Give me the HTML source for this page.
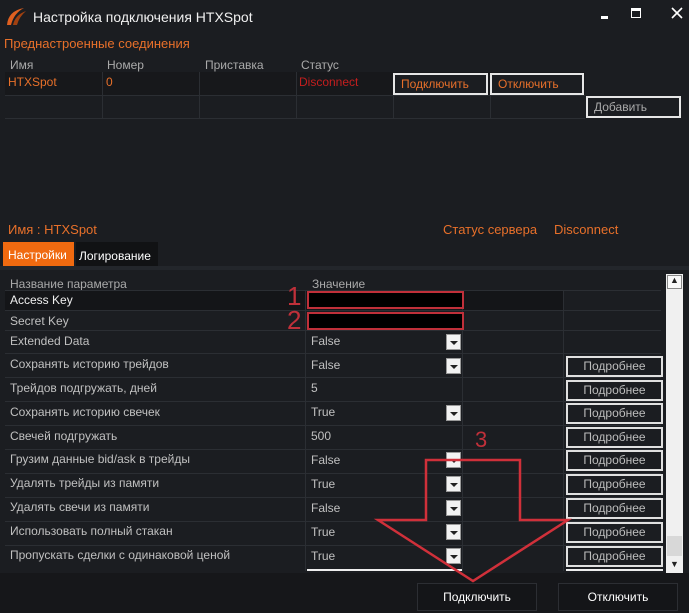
<html><head><style>
body{margin:0;width:689px;height:613px;background:#1b1d21;font-family:"Liberation Sans",sans-serif;font-size:12px;color:#c8c8c8;position:relative;overflow:hidden}
div,span{position:absolute;box-sizing:border-box}
.o{color:#e8702a}
.btnw{border:2px solid #e6e6e6;background:#1b1d21;color:#e8702a;padding:2px 6px;font-size:12px}
.pd{left:566px;width:97px;height:21px;border:2px solid #e0e0e0;background:#1b1d21;color:#bdbdbd;text-align:center;line-height:17px;font-size:12px}
.dd{left:446px;width:15px;height:16px;background:#f2f2f2;border:1px solid #999}
.dd:after{content:"";position:absolute;left:3px;top:6px;border-left:4px solid transparent;border-right:4px solid transparent;border-top:4px solid #222}
.rl{left:5px;width:656px;border-top:1px solid #2b2e33}
.t{left:10px;color:#c0c0c0}
.v{left:311px;color:#c0c0c0}
</style></head><body>
<svg style="position:absolute;left:4px;top:5px" width="24" height="22"><path d="M3 20 Q4 6 20 3 Q10 8 7 20Z" fill="#e06020"/><path d="M9 20 Q11 10 22 6 Q15 12 13 20Z" fill="#a04010"/></svg>
<span style="left:33px;top:9px;font-size:14px;color:#f0f0f0">Настройка подключения HTXSpot</span>
<span style="left:601px;top:16px;width:7px;height:3px;background:#fff"></span>
<span style="left:631px;top:8px;width:10px;height:10px;border:1.5px solid #fff;border-top-width:3px"></span>
<svg style="position:absolute;left:671px;top:7px" width="12" height="12"><path d="M1 1L11 11M11 1L1 11" stroke="#fff" stroke-width="1.6"/></svg>
<span class="o" style="left:4px;top:36px;font-size:13px">Преднастроенные соединения</span>
<span style="left:10px;top:58px;color:#aaa">Имя</span>
<span style="left:107px;top:58px;color:#aaa">Номер</span>
<span style="left:205px;top:58px;color:#aaa">Приставка</span>
<span style="left:301px;top:58px;color:#aaa">Статус</span>
<div style="left:5px;top:72px;width:580px;height:24px;background:#17181b"></div>
<span class="o" style="left:8px;top:75px">HTXSpot</span>
<span class="o" style="left:106px;top:75px">0</span>
<span style="left:299px;top:75px;color:#c41e1e">Disconnect</span>
<div class="btnw" style="left:393px;top:73px;width:95px;height:22px">Подключить</div>
<div class="btnw" style="left:490px;top:73px;width:94px;height:22px">Отключить</div>
<div style="left:5px;top:95px;width:580px;border-top:1px solid #2b2e33"></div>
<div style="left:5px;top:118px;width:580px;border-top:1px solid #2b2e33"></div>
<div style="left:102px;top:72px;height:46px;border-left:1px solid #2b2e33"></div>
<div style="left:199px;top:72px;height:46px;border-left:1px solid #2b2e33"></div>
<div style="left:296px;top:72px;height:46px;border-left:1px solid #2b2e33"></div>
<div style="left:393px;top:95px;height:23px;border-left:1px solid #2b2e33"></div>
<div style="left:490px;top:95px;height:23px;border-left:1px solid #2b2e33"></div>
<div class="btnw" style="left:586px;top:96px;width:95px;height:22px;color:#aaa">Добавить</div>
<span class="o" style="left:8px;top:222px;font-size:13px">Имя : HTXSpot</span>
<span class="o" style="left:443px;top:222px;font-size:13px">Статус сервера</span>
<span class="o" style="left:554px;top:222px;font-size:13px">Disconnect</span>
<div style="left:3px;top:242px;width:71px;height:24px;background:#f06a10;color:#fff;padding:6px 0 0 5px">Настройки</div>
<div style="left:76px;top:242px;width:82px;height:24px;background:#111214;color:#fff;padding:7px 0 0 3px">Логирование</div>
<div style="left:0;top:266px;width:689px;height:4px;background:#23262b"></div>
<span style="left:10px;top:277px;color:#aaa">Название параметра</span>
<span style="left:312px;top:277px;color:#aaa">Значение</span>
<div style="left:5px;top:290px;width:558px;height:20px;background:#141518"></div>
<span class="t" style="top:293px;color:#f0f0f0">Access Key</span>
<span class="t" style="top:314px">Secret Key</span>
<span class="t" style="top:334px">Extended Data</span><span class="v" style="top:334px">False</span>
<span class="t" style="top:357px">Сохранять историю трейдов</span><span class="v" style="top:358px">False</span>
<span class="t" style="top:381px">Трейдов подгружать, дней</span><span class="v" style="top:381px">5</span>
<span class="t" style="top:405px">Сохранять историю свечек</span><span class="v" style="top:405px">True</span>
<span class="t" style="top:429px">Свечей подгружать</span><span class="v" style="top:429px">500</span>
<span class="t" style="top:452px">Грузим данные bid/ask в трейды</span><span class="v" style="top:453px">False</span>
<span class="t" style="top:476px">Удалять трейды из памяти</span><span class="v" style="top:477px">True</span>
<span class="t" style="top:500px">Удалять свечи из памяти</span><span class="v" style="top:501px">False</span>
<span class="t" style="top:524px">Использовать полный стакан</span><span class="v" style="top:525px">True</span>
<span class="t" style="top:548px">Пропускать сделки с одинаковой ценой</span><span class="v" style="top:549px">True</span>
<div class="rl" style="top:290px"></div><div class="rl" style="top:310px"></div><div class="rl" style="top:330px"></div><div class="rl" style="top:353px"></div><div class="rl" style="top:377px"></div><div class="rl" style="top:401px"></div><div class="rl" style="top:425px"></div><div class="rl" style="top:449px"></div><div class="rl" style="top:473px"></div><div class="rl" style="top:497px"></div><div class="rl" style="top:521px"></div><div class="rl" style="top:545px"></div>
<div style="left:305px;top:290px;height:281px;border-left:1px solid #2b2e33"></div>
<div style="left:462px;top:290px;height:281px;border-left:1px solid #2b2e33"></div>
<div style="left:563px;top:290px;height:281px;border-left:1px solid #2b2e33"></div>
<div style="left:307px;top:291px;width:157px;height:18px;background:#000;border:2px solid #c0303a"></div>
<div style="left:307px;top:312px;width:157px;height:18px;background:#000;border:2px solid #c0303a"></div>
<span style="left:287px;top:282px;font-size:26px;line-height:28px;color:#c0303a">1</span>
<span style="left:287px;top:306px;font-size:26px;line-height:28px;color:#c0303a">2</span>
<div class="dd" style="top:334px"></div><div class="dd" style="top:358px"></div><div class="dd" style="top:405px"></div><div class="dd" style="top:452px"></div><div class="dd" style="top:476px"></div><div class="dd" style="top:500px"></div><div class="dd" style="top:524px"></div><div class="dd" style="top:548px"></div>
<div class="pd" style="top:356px">Подробнее</div><div class="pd" style="top:380px">Подробнее</div><div class="pd" style="top:403px">Подробнее</div><div class="pd" style="top:427px">Подробнее</div><div class="pd" style="top:450px">Подробнее</div><div class="pd" style="top:474px">Подробнее</div><div class="pd" style="top:498px">Подробнее</div><div class="pd" style="top:522px">Подробнее</div><div class="pd" style="top:546px">Подробнее</div>
<div style="left:307px;top:569px;width:155px;border-top:2px solid #eee"></div>
<div style="left:566px;top:569px;width:97px;border-top:2px solid #eee"></div>
<div style="left:666px;top:274px;width:17px;height:299px;background:#f0f0f0"></div>
<div style="left:667px;top:275px;width:15px;height:14px;background:#f8f8f8;border:1px solid #888"></div>
<span style="left:670px;top:275px;font-size:9px;color:#222">▲</span>
<div style="left:667px;top:536px;width:15px;height:20px;background:#d8d8d8"></div>
<span style="left:670px;top:559px;font-size:9px;color:#222">▼</span>
<div style="left:0;top:573px;width:689px;height:40px;background:#16171a"></div>
<div style="left:417px;top:583px;width:120px;height:28px;border:1px solid #2c2e33;background:#141518;color:#fff;text-align:center;line-height:26px">Подключить</div>
<div style="left:558px;top:583px;width:120px;height:28px;border:1px solid #2c2e33;background:#141518;color:#fff;text-align:center;line-height:26px">Отключить</div>
<span style="left:475px;top:427px;font-size:22px;color:#c0303a">3</span>
<svg style="position:absolute;left:0;top:0" width="689" height="613"><polygon points="426,460 520,460 520,520 568,520 473,581 378,520 426,520" fill="none" stroke="#d0303a" stroke-width="2.5"/></svg>
</body></html>
